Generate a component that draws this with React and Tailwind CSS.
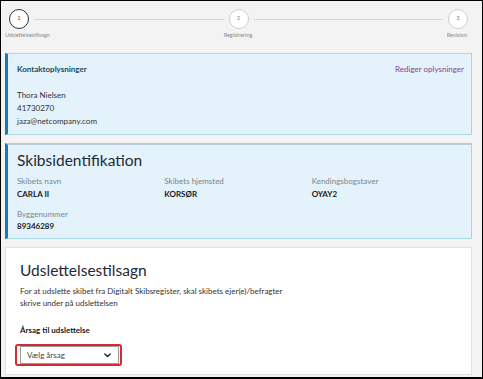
import React from "react";

const font = { fontFamily: "Lato, 'Noto Sans', sans-serif" };

function Circle({ n, active }) {
  return (
    <div
      className={
        "flex h-[20px] w-[20px] shrink-0 items-center justify-center rounded-full bg-white text-[5px] " +
        (active ? "border-[1.5px] border-[#2d3138] text-[#2d3138]" : "border border-[#cfcfcf] text-[#777]")
      }
    >
      {n}
    </div>
  );
}

export default function App() {
  return (
    <div
      className="h-[379px] w-[483px] overflow-hidden border border-b-2 border-black bg-[#f3f3f3] text-[#333]"
      style={font}
    >
      {/* Stepper */}
      <div className="pt-[8px]">
        <div className="flex items-center pl-[8px] pr-[14px]">
          <Circle n={1} active />
          <div className="mx-[5px] h-px flex-1 bg-[#d8d8d8]" />
          <Circle n={2} />
          <div className="mx-[5px] h-px flex-1 bg-[#d8d8d8]" />
          <Circle n={3} />
        </div>
        <div className="mt-[2px] grid grid-cols-3 pl-[4px] pr-[15px] text-[5.5px] leading-[8px] text-[#8a8a8a]">
          <div className="text-left">Udslettelsestilsagn</div>
          <div className="pl-[4px] text-center">Registrering</div>
          <div className="text-right">Revision</div>
        </div>
      </div>

      <div className="ml-[4px] mt-[14px] flex w-[467px] flex-col gap-[8px]">
        {/* Contact card */}
        <div className="flex border border-l-[3px] border-[#a9d6e6] border-l-[#1c78b5] bg-[#e4f2fb] pb-[6px] pl-[9px] pr-[7px] pt-[9px]">
          <div className="flex flex-1 flex-col text-[8px] leading-[13px]">
            <div className="font-bold text-[#1b4b58]">Kontaktoplysninger</div>
            <div className="mt-[13px]">Thora Nielsen</div>
            <div>41730270</div>
            <div>jaza@netcompany.com</div>
          </div>
          <div className="text-[8px] leading-[13px] text-[#8b3f8e]">Rediger oplysninger</div>
        </div>

        {/* Ship identification */}
        <div className="border border-l-[3px] border-[#a9d6e6] border-t-2 border-t-[#b9cbd8] border-l-[#1c78b5] bg-[#e4f2fb] pb-[6px] pl-[9px] pr-[12px] pt-[5px]">
          <div className="text-[15.5px] leading-[20px] text-[#1e2a33]">Skibsidentifikation</div>
          <div className="mt-[5px] grid grid-cols-3 gap-y-[8px] text-[8px] leading-[12px]">
            <div>
              <div className="text-[#7b858c]">Skibets navn</div>
              <div className="mt-px font-bold text-[#1a1a1a]">CARLA II</div>
            </div>
            <div>
              <div className="text-[#7b858c]">Skibets hjemsted</div>
              <div className="mt-px font-bold text-[#1a1a1a]">KORSØR</div>
            </div>
            <div>
              <div className="text-[#7b858c]">Kendingsbogstaver</div>
              <div className="mt-px font-bold text-[#1a1a1a]">OYAY2</div>
            </div>
            <div>
              <div className="text-[#7b858c]">Byggenummer</div>
              <div className="font-bold text-[#1a1a1a]">89346289</div>
            </div>
          </div>
        </div>

        {/* Deletion consent */}
        <div className="border border-[#e2e2e2] bg-white pb-[8px] pl-[8px] pt-[12px]">
          <div className="pl-[6px] text-[15.5px] leading-[20px] text-[#1e2a33]">Udslettelsestilsagn</div>
          <div className="mt-[6px] pl-[6px] text-[8px] leading-[11.7px] text-[#333]">
            For at udslette skibet fra Digitalt Skibsregister, skal skibets ejer(e)/befragter
            <br />
            skrive under på udslettelsen
          </div>
          <div className="mt-[15px] pl-[6px] text-[8px] font-bold leading-[12px] text-[#1a1a1a]">
            Årsag til udslettelse
          </div>
          <div className="ml-[1px] mt-[8px] w-[107px] rounded-[3px] border-2 border-[#d42a35]">
            <div className="ml-[3px] flex h-[18px] w-[99px] items-center justify-between border border-[#9a9a9a] bg-white pl-[6px] pr-[7px] text-[8px] text-[#444]">
              <span>Vælg årsag</span>
              <svg width="7" height="5" viewBox="0 0 10 7" fill="none">
                <path d="M1.2 1.2 L5 5 L8.8 1.2" stroke="#222" strokeWidth="2" strokeLinecap="round" strokeLinejoin="round" />
              </svg>
            </div>
          </div>
        </div>
      </div>
    </div>
  );
}
